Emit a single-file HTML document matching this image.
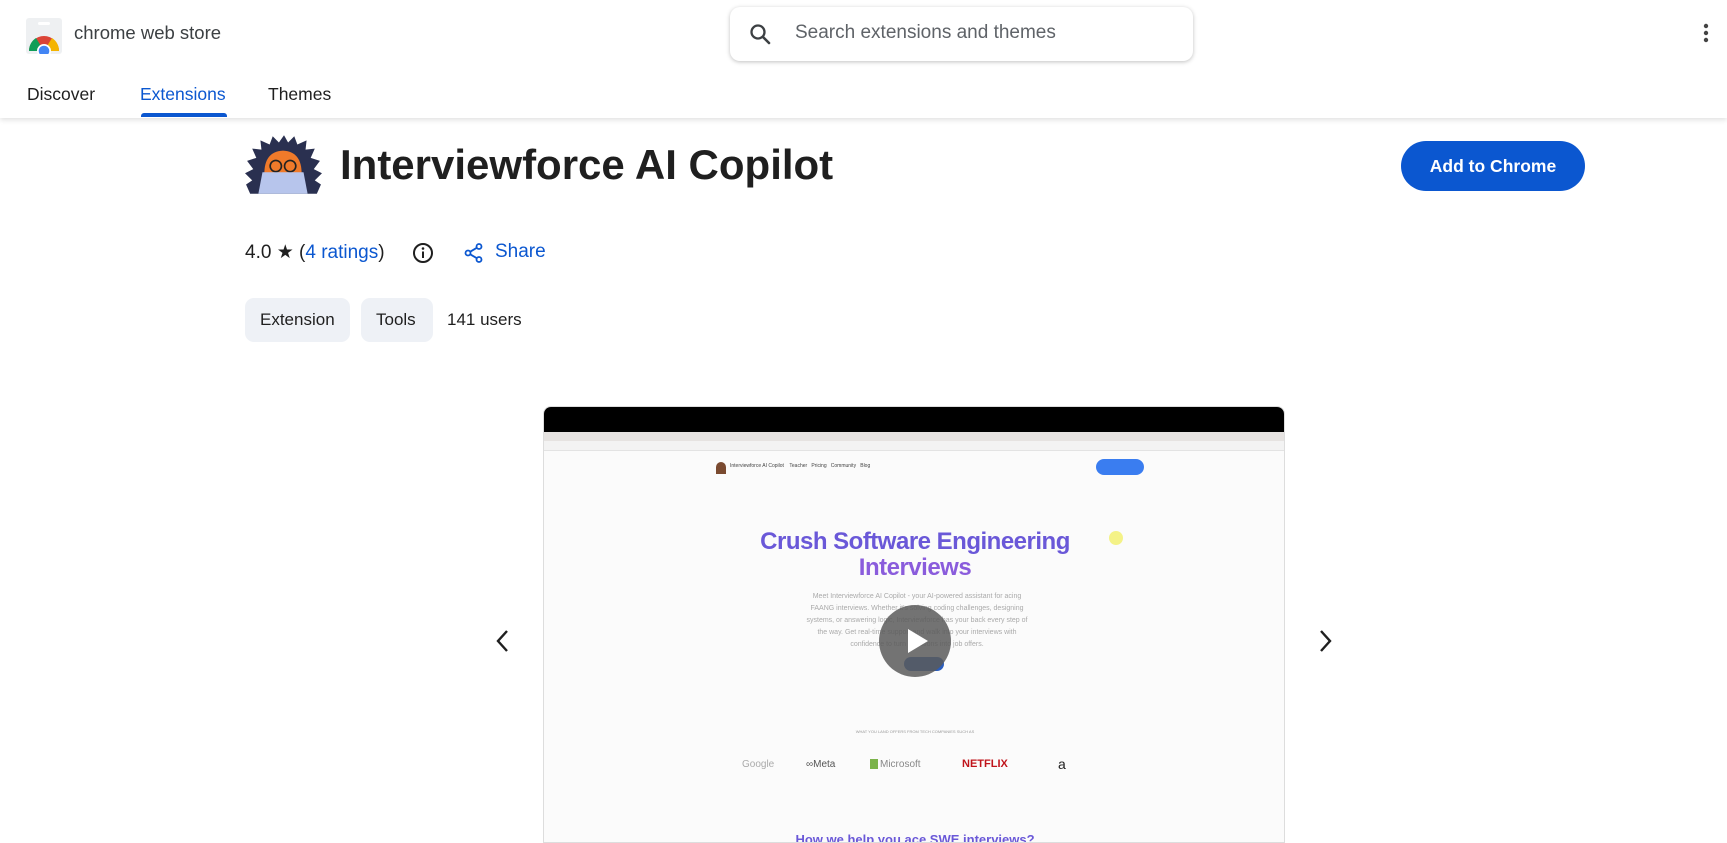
<!DOCTYPE html>
<html><head><meta charset="utf-8"><style>
*{margin:0;padding:0;box-sizing:border-box}
body{width:1727px;height:843px;overflow:hidden;background:#fff;font-family:"Liberation Sans",Arial,sans-serif;color:#1f1f1f;position:relative}
.a{position:absolute}
.hdr{left:0;top:0;width:1727px;height:118px;background:#fff;box-shadow:0 2px 5px rgba(0,0,0,.12);z-index:2}
.tab{top:84px;font-size:17.5px;color:#1f1f1f}
.search{left:730px;top:7px;width:463px;height:54px;border-radius:10px;box-shadow:0 1px 4px rgba(0,0,0,.25);background:#fff}
.chip{top:298px;height:44px;border-radius:9px;background:#eef1f6;font-size:17px;line-height:44px;padding:0 15px}
</style></head><body>
<div class="a hdr">
  <svg class="a" style="left:26px;top:18px" width="36" height="36" viewBox="0 0 36 36">
    <rect x="0" y="0" width="36" height="36" rx="3" fill="#eef0f2"/>
    <rect x="12" y="4" width="12" height="3" rx="1.5" fill="#fff"/>
    <path d="M3 33 A15 15 0 0 1 33 33 Z" fill="#db4437"/>
    <path d="M3 33 A15 15 0 0 1 10 20 L18 33Z" fill="#0f9d58"/>
    <path d="M33 33 A15 15 0 0 0 26 20 L18 33Z" fill="#f4b400"/>
    <circle cx="18" cy="33" r="7" fill="#fff"/><circle cx="18" cy="33" r="5.3" fill="#4285f4"/>
  </svg>
  <div class="a" style="left:74px;top:22px;font-size:18.5px;color:#3c4043">chrome web store</div>
  <div class="a search">
    <svg class="a" style="left:18px;top:15px" width="24" height="24" viewBox="0 0 24 24"><circle cx="10" cy="10" r="6.5" fill="none" stroke="#3c4043" stroke-width="2.3"/><path d="M15 15 L21 21" stroke="#3c4043" stroke-width="2.6" stroke-linecap="round"/></svg>
    <div class="a" style="left:65px;top:15px;font-size:19px;color:#5f6368">Search extensions and themes</div>
  </div>
  <svg class="a" style="left:1700px;top:22px" width="12" height="24"><circle cx="6" cy="4" r="2.2" fill="#444"/><circle cx="6" cy="11" r="2.2" fill="#444"/><circle cx="6" cy="18" r="2.2" fill="#444"/></svg>
  <div class="a tab" style="left:27px">Discover</div>
  <div class="a tab" style="left:140px;color:#0b57d0">Extensions</div>
  <div class="a" style="left:141px;top:113px;width:86px;height:4px;background:#0b57d0;border-radius:3px 3px 0 0"></div>
  <div class="a tab" style="left:268px">Themes</div>
</div>

<svg class="a" style="left:244px;top:135px" width="79" height="59" viewBox="0 0 77 57">
  <path d="M6 57 L2 48 L8 44 L1 37 L9 33 L3 25 L12 22 L8 13 L17 14 L16 5 L25 9 L28 1 L34 7 L39 0 L43 7 L49 1 L52 9 L61 5 L60 14 L69 13 L65 22 L74 25 L68 33 L76 37 L69 44 L75 48 L71 57 Z" fill="#2a3050"/>
  <path d="M20 42 Q18 16 38 15 Q58 16 56 42 Z" fill="#f07a2a"/>
  <circle cx="31" cy="30" r="5.5" fill="none" stroke="#222" stroke-width="1.6"/><circle cx="45" cy="30" r="5.5" fill="none" stroke="#222" stroke-width="1.6"/>
  <path d="M14 57 L18 36 L58 36 L62 57 Z" fill="#b7c5ec"/>
</svg>
<div class="a" style="left:340px;top:141px;font-size:42px;font-weight:bold;color:#1f1f1f;letter-spacing:0px">Interviewforce AI Copilot</div>

<div class="a" style="left:1401px;top:141px;width:184px;height:50px;border-radius:25px;background:#0b57d0;color:#fff;font-size:17.5px;font-weight:bold;text-align:center;line-height:50px">Add to Chrome</div>

<div class="a" style="left:245px;top:241px;font-size:19px;color:#1f1f1f">4.0 ★ (<span style="color:#0b57d0">4 ratings</span>)</div>
<svg class="a" style="left:412px;top:242px" width="22" height="22" viewBox="0 0 22 22"><circle cx="11" cy="11" r="9" fill="none" stroke="#1f1f1f" stroke-width="2"/><rect x="10" y="9.5" width="2" height="6.5" fill="#1f1f1f"/><circle cx="11" cy="6.5" r="1.3" fill="#1f1f1f"/></svg>
<svg class="a" style="left:463px;top:242px" width="22" height="22" viewBox="0 0 22 22" fill="none" stroke="#0b57d0" stroke-width="1.8"><circle cx="16" cy="4.5" r="2.5"/><circle cx="5" cy="11" r="2.5"/><circle cx="16" cy="17.5" r="2.5"/><path d="M7.2 9.7 L13.8 5.8 M7.2 12.3 L13.8 16.2"/></svg>
<div class="a" style="left:495px;top:241px;font-size:19px;color:#0b57d0">Share</div>

<div class="a chip" style="left:245px;width:105px">Extension</div>
<div class="a chip" style="left:361px;width:72px">Tools</div>
<div class="a" style="left:447px;top:310px;font-size:17px">141 users</div>

<svg class="a" style="left:495px;top:628px" width="16" height="26" viewBox="0 0 16 26"><path d="M12 3 L3 13 L12 23" fill="none" stroke="#1f1f1f" stroke-width="2.4"/></svg>
<svg class="a" style="left:1317px;top:628px" width="16" height="26" viewBox="0 0 16 26"><path d="M4 3 L13 13 L4 23" fill="none" stroke="#1f1f1f" stroke-width="2.4"/></svg>

<div class="a" style="left:543px;top:406px;width:742px;height:437px;border-radius:8px 8px 0 0;overflow:hidden;background:#fbfbfb;border:1px solid #ddd">
  <div class="a" style="left:0;top:0;width:742px;height:25px;background:#000"></div>
  <div class="a" style="left:0;top:25px;width:742px;height:9px;background:#e6e3e1"></div>
  <div class="a" style="left:0;top:34px;width:742px;height:10px;background:#f3f3f3;border-bottom:1px solid #e3e3e3"></div>
  <div class="a" style="left:172px;top:55px;width:10px;height:12px;border-radius:5px 5px 0 0;background:#7a4a30"></div>
  <div class="a" style="left:186px;top:56px;font-size:5px;color:#444">Interviewforce AI Copilot &nbsp;&nbsp; Teacher &nbsp; Pricing &nbsp; Community &nbsp; Blog</div>
  <div class="a" style="left:552px;top:52px;width:48px;height:16px;border-radius:8px;background:#3a7df0"></div>
  <div class="a" style="left:0;top:122px;width:742px;text-align:center;font-size:24px;font-weight:bold;line-height:26px;color:#6a58d8;letter-spacing:-0.5px">Crush Software Engineering<br><span style="color:#8a5cdc">Interviews</span></div>
  <div class="a" style="left:565px;top:124px;width:14px;height:14px;border-radius:7px;background:#f2f06a;opacity:.8"></div>
  <div class="a" style="left:258px;top:184px;width:230px;font-size:7px;line-height:12px;color:#aaa;text-align:center">Meet Interviewforce AI Copilot - your AI-powered assistant for acing FAANG interviews. Whether it's solving coding challenges, designing systems, or answering logic, Interviewforce has your back every step of the way. Get real-time support and walk into your interviews with confidence to turn questions into job offers.</div>
  <div class="a" style="left:360px;top:250px;width:40px;height:14px;border-radius:7px;background:#2a5dbd"></div>
  <div class="a" style="left:335px;top:198px;width:72px;height:72px;border-radius:36px;background:rgba(90,90,90,.85)"></div>
  <svg class="a" style="left:362px;top:221px" width="24" height="26"><path d="M2 1 L22 13 L2 25 Z" fill="#fff"/></svg>
  <div class="a" style="left:0;top:322px;width:742px;text-align:center;font-size:4px;color:#999">WHAT YOU LAND OFFERS FROM TECH COMPANIES SUCH AS</div>
  <div class="a" style="left:198px;top:352px;font-size:10px;color:#aaa">Google</div>
  <div class="a" style="left:262px;top:352px;font-size:10px;color:#555">∞Meta</div>
  <div class="a" style="left:326px;top:352px;width:8px;height:10px;background:#7bb34a"></div>
  <div class="a" style="left:336px;top:352px;font-size:10px;color:#888">Microsoft</div>
  <div class="a" style="left:418px;top:351px;font-size:11px;color:#c0141b;font-weight:bold">NETFLIX</div>
  <div class="a" style="left:514px;top:349px;font-size:14px;color:#222">a</div>
  <div class="a" style="left:0;top:425px;width:742px;text-align:center;font-size:13px;font-weight:bold;color:#6a58d8">How we help you ace SWE interviews?</div>
</div>
</body></html>
